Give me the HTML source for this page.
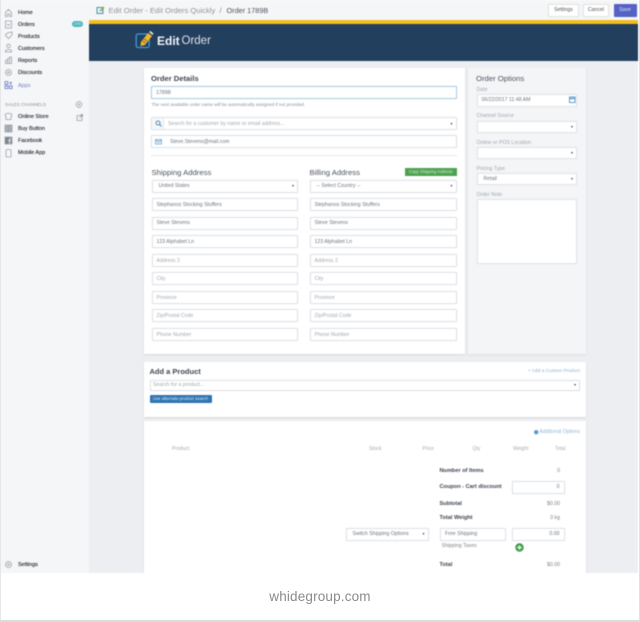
<!DOCTYPE html>
<html><head><meta charset="utf-8"><title>Edit Order</title>
<style>
html,body{margin:0;padding:0;background:#fff}
body{width:640px;height:622px;overflow:hidden;position:relative;font-family:"Liberation Sans",sans-serif}
div,span{position:absolute;box-sizing:border-box;white-space:nowrap}
svg{position:absolute;overflow:visible}
#app{left:0;top:0;width:638px;height:573px;background:#edeef1;overflow:hidden;filter:blur(.5px)}
.n{left:18px;font-size:5.5px;line-height:8px;height:8px;color:#2f353c;text-shadow:0 0 .4px #555;top:0}
.ic{fill:none;stroke:#9aa1a8;stroke-width:.8}
.card{background:#fff;box-shadow:0 1px 2px #d5d7da}
.f{background:#fff;border:1px solid #e0e2e6;border-radius:1px;font-size:5.2px;color:#70767d;padding-left:4px;padding-top:1.200px;box-shadow:0 0 1px #e4e6e9}
.p{color:#a4a9ae}
.a{right:3px;top:50%;margin-top:-4px;font-size:4px;line-height:8px;color:#444;font-style:normal}
.h{font-size:7.700px;line-height:10px;color:#4d5560}
.l{font-size:5.200px;line-height:7px;color:#a2a7ac}
.b{font-size:5.600px;line-height:8px;color:#3d4450;font-weight:bold}
.r{font-size:5.200px;line-height:8px;color:#7d8388;text-align:right}
.t{font-size:5px;line-height:7px;color:#a7abb0;top:446px}
</style></head>
<body>
<div id="app">
  <!-- sidebar -->
  <div style="left:0;top:0;width:89px;height:573px;background:#f5f6f8"></div>
  <svg style="left:0;top:0" width="89" height="573" class="ic">
    <path d="M5.500 12.500l3-3 3 3v4h-2v-2.500h-2v2.500h-2z"/>
    <path d="M5.500 21h6v7h-6zM7 24l1.500 1.500 1.500-1.500"/>
    <path d="M6 34l3-1.500 3-.5v3l-3.500 3.500-3-3z"/>
    <circle cx="8.500" cy="46" r="1.800"/><path d="M5.500 52v-1.500q3-2 6 0v1.500z"/>
    <path d="M5.500 63.500v-3h2v3zM7.500 63.500v-5h2v5zM9.500 63.500v-6.500h2v6.500z"/>
    <circle cx="8.500" cy="72.500" r="3"/><circle cx="8.500" cy="72.500" r="1"/>
    <g stroke="#6a78c8"><path d="M5 81.500h2.800v2.800h-2.800zM5 85.800h2.800v2.800h-2.800zM9.300 85.800h2.800v2.800h-2.800zM9.300 83h2.800M10.700 81.500v3"/></g>
    <circle cx="79" cy="104.500" r="2.800"/><path d="M77.800 104.500h2.400M79 103.300v2.400"/>
    <path d="M6 113.500h5l1 2-1 1v3h-5v-3l-1-1z"/>
    <path d="M77 115.500h5v5h-5zM79.500 118l3-3.500M80.500 114.500h2.200v2"/>
    <path d="M5 125h3.200v7h-3.200zM8.800 125h3.200v7h-3.200z" fill="#a9afb5"/>
    <rect x="5" y="137" width="7" height="7" fill="#7c858e"/><path d="M9.500 144v-4.500q0-1 1.500-1M8 140.500h3" stroke="#f5f6f8"/>
    <rect x="6" y="149.500" width="5" height="7.500" rx=".8"/>
    <circle cx="8.500" cy="564.500" r="3"/><circle cx="8.500" cy="564.500" r="1"/>
  </svg>
  <div class="n" style="top:8.500px">Home</div>
  <div class="n" style="top:20.500px">Orders</div>
  <div style="left:72px;top:20.500px;width:11px;height:6px;border-radius:3px;background:#4fb5bd;color:#e8f6f7;font-size:4px;line-height:6px;text-align:center">276</div>
  <div class="n" style="top:32.500px">Products</div>
  <div class="n" style="top:45px">Customers</div>
  <div class="n" style="top:57px">Reports</div>
  <div class="n" style="top:69px">Discounts</div>
  <div class="n" style="top:81.500px;color:#7482c8;text-shadow:none">Apps</div>
  <div class="n" style="top:100.500px;left:5px;font-size:4.600px;text-shadow:none;color:#8a9097">SALES CHANNELS</div>
  <div class="n" style="top:112.500px">Online Store</div>
  <div class="n" style="top:125px">Buy Button</div>
  <div class="n" style="top:137px">Facebook</div>
  <div class="n" style="top:149px">Mobile App</div>
  <div class="n" style="top:560.500px">Settings</div>

  <!-- top bar -->
  <div style="left:89px;top:0;width:549px;height:20px;background:#f5f6f7"></div>
  <svg style="left:96px;top:5px" width="10" height="10"><rect x="1" y="2.500" width="6" height="6" fill="#eaf3f0" stroke="#4f8fb5" stroke-width="1"/><path d="M3.500 6l3.500-4.500 1.500 1-3.500 4z" fill="#7bb241"/></svg>
  <div style="left:108.500px;top:5.500px;font-size:7.600px;line-height:10px;color:#8f959c">Edit Order - Edit Orders Quickly</div>
  <div style="left:219.500px;top:5.500px;font-size:7.600px;line-height:10px;color:#858c94">/</div>
  <div style="left:226.500px;top:5.500px;font-size:7.300px;line-height:10px;color:#4d545c">Order 1789B</div>
  <div class="f" style="left:548px;top:4px;width:31px;height:13px;padding:0;text-align:center;line-height:11px;font-size:5.200px;color:#555">Settings</div>
  <div class="f" style="left:583px;top:4px;width:26px;height:13px;padding:0;text-align:center;line-height:11px;font-size:5.200px;color:#555">Cancel</div>
  <div style="left:613.500px;top:4px;width:23px;height:13px;background:#5561c4;border-radius:1px;text-align:center;line-height:13px;font-size:5.200px;color:#dfe2f6">Save</div>

  <!-- banner -->
  <div style="left:89px;top:20px;width:549px;height:4px;background:#f3bd1d"></div>
  <div style="left:89px;top:24px;width:549px;height:36.500px;background:#233f5e"></div>
  <svg style="left:135px;top:30px" width="22" height="20">
    <rect x="1.200" y="4" width="13" height="13.500" rx="2" fill="none" stroke="#3d9ad6" stroke-width="1.300"/>
    <path d="M6 12l7-9 4 3-7 9-4.500 1z" fill="#f2b824"/>
    <path d="M14 2l1.500-1 3 2.500-1 1.500z" fill="#e8e6d8"/>
    <path d="M9 9l3 2M7.500 11l3 2" stroke="#233f5e" stroke-width=".6"/>
  </svg>
  <div style="left:157px;top:34px;font-size:12px;line-height:14px;color:#f3f5f7;font-weight:bold">Edit</div>
  <div style="left:181.500px;top:34px;font-size:11.500px;line-height:14px;color:#dde3e9">Order</div>

  <!-- order details -->
  <div class="card" style="left:144px;top:68px;width:321px;height:286px"></div>
  <div style="left:151px;top:74px;font-size:7.600px;line-height:10px;font-weight:bold;color:#3f4753">Order Details</div>
  <div class="f" style="left:151px;top:86px;width:305.500px;height:13px;border-color:#a9cbe3;line-height:10px">1789B</div>
  <div style="left:151.500px;top:101.500px;font-size:4.550px;line-height:6px;color:#8d9298">The next available order name will be automatically assigned if not provided.</div>
  <div class="f" style="left:151px;top:117px;width:305.500px;height:13px;line-height:10px;padding-left:16px"><span class="p" style="position:static">Search for a customer by name or email address...</span><span class="a">▾</span></div>
  <div style="left:152px;top:118px;width:12px;height:11px;background:#f7f8f9;border-right:1px solid #e6e8ea"></div>
  <svg style="left:155px;top:120px" width="7" height="7" fill="none" stroke="#4d93c9" stroke-width="1.100"><circle cx="3" cy="3" r="2"/><path d="M4.500 4.500l2 2"/></svg>
  <div class="f" style="left:151px;top:135px;width:305.500px;height:13px;line-height:10px;padding-left:18px">Steve.Stevens@mail.com</div>
  <svg style="left:154.500px;top:139px" width="8" height="6" fill="#eaf3f8" stroke="#77a9cf" stroke-width=".8"><rect x=".5" y=".5" width="6" height="4.500"/><path d="M.5 1l3 2 3-2"/></svg>
  <div style="left:151px;top:155px;width:305.500px;height:1px;background:#e7e9eb"></div>

  <div class="h" style="left:151.500px;top:167.500px">Shipping Address</div>
  <div class="h" style="left:309.500px;top:167.500px">Billing Address</div>
  <div style="left:405px;top:167.500px;width:51.500px;height:8.500px;background:#4da24f;color:#cfe9d0;font-size:4.200px;line-height:8.500px;text-align:center">Copy Shipping Address</div>

  <div class="f" style="left:151.500px;top:180px;width:146.500px;height:12.500px;line-height:9.500px;padding-left:6px">United States<span class="a">▾</span></div>
  <div class="f" style="left:151.500px;top:198px;width:146.500px;height:13px;line-height:10px">Stephanos Stocking Stuffers</div>
  <div class="f" style="left:151.500px;top:217px;width:146.500px;height:12.500px;line-height:9.500px">Steve Stevens</div>
  <div class="f" style="left:151.500px;top:235px;width:146.500px;height:13px;line-height:10px">123 Alphabet Ln</div>
  <div class="f p" style="left:151.500px;top:254px;width:146.500px;height:13px;line-height:10px">Address 2</div>
  <div class="f p" style="left:151.500px;top:272px;width:146.500px;height:13px;line-height:10px">City</div>
  <div class="f p" style="left:151.500px;top:291px;width:146.500px;height:13px;line-height:10px">Province</div>
  <div class="f p" style="left:151.500px;top:309px;width:146.500px;height:13px;line-height:10px">Zip/Postal Code</div>
  <div class="f p" style="left:151.500px;top:328px;width:146.500px;height:13px;line-height:10px">Phone Number</div>

  <div class="f" style="left:309.500px;top:180px;width:147px;height:12.500px;line-height:9.500px;padding-left:6px">-- Select Country --<span class="a">▾</span></div>
  <div class="f" style="left:309.500px;top:198px;width:147px;height:13px;line-height:10px">Stephanos Stocking Stuffers</div>
  <div class="f" style="left:309.500px;top:217px;width:147px;height:12.500px;line-height:9.500px">Steve Stevens</div>
  <div class="f" style="left:309.500px;top:235px;width:147px;height:13px;line-height:10px">123 Alphabet Ln</div>
  <div class="f p" style="left:309.500px;top:254px;width:147px;height:13px;line-height:10px">Address 2</div>
  <div class="f p" style="left:309.500px;top:272px;width:147px;height:13px;line-height:10px">City</div>
  <div class="f p" style="left:309.500px;top:291px;width:147px;height:13px;line-height:10px">Province</div>
  <div class="f p" style="left:309.500px;top:309px;width:147px;height:13px;line-height:10px">Zip/Postal Code</div>
  <div class="f p" style="left:309.500px;top:328px;width:147px;height:13px;line-height:10px">Phone Number</div>

  <!-- order options -->
  <div style="left:468px;top:68px;width:117.500px;height:286px;background:#f4f5f7;box-shadow:0 1px 2px #dcdee1"></div>
  <div class="h" style="left:476px;top:74px">Order Options</div>
  <div class="l" style="left:476.500px;top:87px">Date</div>
  <div class="f" style="left:476.500px;top:94px;width:100.500px;height:12.500px;line-height:9.500px">06/22/2017 11:48 AM</div>
  <svg style="left:568.500px;top:96px" width="7" height="7" fill="none" stroke="#4d93c9" stroke-width=".9"><rect x=".5" y="1" width="5.500" height="5.500"/><path d="M.5 2.500h5.500" stroke-width="1.200"/></svg>
  <div class="l" style="left:476.500px;top:113px">Channel Source</div>
  <div class="f" style="left:476.500px;top:120.500px;width:100.500px;height:12px"><span class="a">▾</span></div>
  <div class="l" style="left:476.500px;top:139.500px">Online or POS Location</div>
  <div class="f" style="left:476.500px;top:146.500px;width:100.500px;height:12px"><span class="a">▾</span></div>
  <div class="l" style="left:476.500px;top:165.500px">Pricing Type</div>
  <div class="f" style="left:476.500px;top:172.500px;width:100.500px;height:12.500px;line-height:9.500px;padding-left:6px">Retail<span class="a">▾</span></div>
  <div class="l" style="left:476.500px;top:192px">Order Note</div>
  <div class="f" style="left:476.500px;top:199px;width:100.500px;height:65px"></div>

  <!-- add a product -->
  <div class="card" style="left:144px;top:362px;width:442px;height:55px"></div>
  <div style="left:149.500px;top:367px;font-size:7.500px;line-height:10px;font-weight:bold;color:#3f4753">Add a Product</div>
  <div style="right:58px;top:367.500px;font-size:4.800px;line-height:7px;color:#89b4d6">+ Add a Custom Product</div>
  <div class="f" style="left:149.500px;top:380px;width:430.500px;height:10.500px;line-height:7.500px;padding-left:2.500px"><span class="p" style="position:static">Search for a product...</span><span class="a">▾</span></div>
  <div style="left:149.500px;top:395px;width:62px;height:8px;background:#2f74b2;border-radius:1px;color:#d6e6f3;font-size:4.300px;line-height:8px;text-align:center">Use alternate product search</div>

  <!-- table -->
  <div class="card" style="left:144px;top:421px;width:442px;height:152px"></div>
  <svg style="left:534px;top:429.500px" width="5" height="5"><circle cx="2.200" cy="2.200" r="2.200" fill="#5b9bcd"/></svg>
  <div style="right:58px;top:428.500px;font-size:5px;line-height:7px;color:#8fb8d8">Additional Options</div>
  <div class="t" style="left:172px">Product</div>
  <div class="t" style="left:369px">Stock</div>
  <div class="t" style="left:422.500px">Price</div>
  <div class="t" style="left:472.500px">Qty</div>
  <div class="t" style="left:513px">Weight</div>
  <div class="t" style="left:555px">Total</div>

  <div class="b" style="left:439.500px;top:466.500px">Number of Items</div>
  <div class="r" style="right:78px;top:466.500px">0</div>
  <div class="b" style="left:439.500px;top:483px">Coupon - Cart discount</div>
  <div class="f" style="left:511.500px;top:481px;width:53px;height:12.500px;line-height:9.500px;text-align:right;padding-right:4px">0</div>
  <div class="b" style="left:439.500px;top:499.500px">Subtotal</div>
  <div class="r" style="right:78px;top:499.500px">$0.00</div>
  <div class="b" style="left:439.500px;top:514px">Total Weight</div>
  <div class="r" style="right:78px;top:514px">0 kg</div>
  <div class="f" style="left:345.500px;top:528px;width:83px;height:12.500px;line-height:9.500px;padding-left:6px">Switch Shipping Options<span class="a">▾</span></div>
  <div class="f" style="left:440px;top:528px;width:65.500px;height:12.500px;line-height:9.500px">Free Shipping</div>
  <div class="f" style="left:511.500px;top:528px;width:53px;height:12.500px;line-height:9.500px;text-align:right;padding-right:4px">0.00</div>
  <div style="left:441.500px;top:543px;font-size:5.200px;line-height:7px;color:#7d8388">Shipping Taxes</div>
  <svg style="left:514.500px;top:542.500px" width="9" height="9"><circle cx="4.500" cy="4.500" r="4.200" fill="#3b9a44"/><path d="M2.200 4.500h4.600M4.500 2.200v4.600" stroke="#e6f4e7" stroke-width="1.500"/></svg>
  <div class="b" style="left:439.500px;top:561px">Total</div>
  <div class="r" style="right:78px;top:561px">$0.00</div>
</div>
<div style="left:0;top:0;width:1px;height:622px;background:#e6e6e6"></div>
<div style="left:638.500px;top:0;width:1.500px;height:622px;background:#e2e2e2"></div>
<div style="left:0;top:620px;width:640px;height:2px;background:#dcdcdc"></div>
<div style="left:268px;top:587.500px;width:104px;text-align:center;font-size:13.500px;line-height:18px;color:#8b8b8b;letter-spacing:.17px;filter:blur(.25px)">whidegroup.com</div>
</body></html>
